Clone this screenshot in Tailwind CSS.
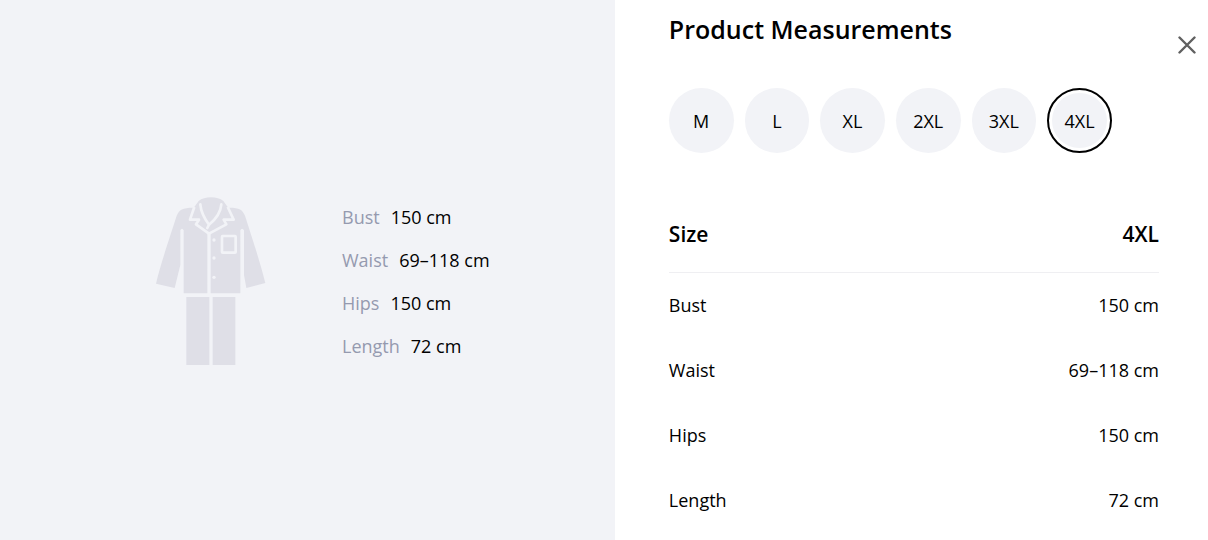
<!DOCTYPE html>
<html lang="en">

<head>
    <meta charset="UTF-8" />
    <meta name="viewport" content="width=device-width, initial-scale=1.0" />
    <title>Product Measurements</title>

    <!-- Tailwind CSS -->
    <script src="https://cdn.jsdelivr.net/npm/@tailwindcss/browser@4"></script>
</head>

<body class="bg-white text-black text-lg font-['Open_Sans',sans-serif]">

    <div class="relative grid grid-cols-[509fr_491fr] min-h-screen">

        <!-- Garment preview -->
        <section class="flex items-center gap-[75px] bg-[#f2f3f7] pl-[155px] pt-[22px]">
            <svg class="w-28 h-[170px] shrink-0" viewBox="30 33 336 510" fill="#dfdfe7" aria-hidden="true">
                <!-- Sleeves and body -->
                <path d="M145 68C112 68 103 74 95 92C78 145 46 240 33 296L89 309L106 240V136Q111 126 116 136V325H187V68Z" />
                <path d="M253 68C284 68 292 74 300 92C317 145 348 240 361 294L304 309L297 270V136Q291 126 286 136V325H197V68Z" />
                <path d="M187 68H197V140H187Z" />
                <!-- Collar -->
                <path d="M148 66L161 48C178 33 218 33 235 48L248 66L266 104H236L244 118L192 146L153 118L162 104H135Z" />
                <path d="M148 66L135 104H162L153 118L192 146L244 118L236 104H266L248 66" fill="none" stroke="#f2f3f7" stroke-width="8" stroke-linejoin="round" />
                <path d="M166 58C168 84 181 104 192 119C207 107 227 84 229 58M192 119L187 129" fill="none" stroke="#f2f3f7" stroke-width="8" stroke-linecap="round" />
                <!-- Pocket and buttons -->
                <rect x="231" y="153" width="41" height="50" rx="2" fill="none" stroke="#f2f3f7" stroke-width="8" />
                <g fill="#f2f3f7">
                    <circle cx="207" cy="165" r="5" />
                    <circle cx="207" cy="219" r="5" />
                    <circle cx="207" cy="277" r="5" />
                </g>
                <!-- Trousers -->
                <path d="M124 336H193V540H124ZM203 336H271V540H203Z" />
            </svg>

            <dl class="flex flex-col gap-4 pt-px leading-[27px] whitespace-nowrap">
                <div class="flex gap-[11px]">
                    <dt class="text-[#959aaf]">Bust</dt>
                    <dd>150 cm</dd>
                </div>
                <div class="flex gap-[11px]">
                    <dt class="text-[#959aaf]">Waist</dt>
                    <dd>69–118 cm</dd>
                </div>
                <div class="flex gap-[11px]">
                    <dt class="text-[#959aaf]">Hips</dt>
                    <dd>150 cm</dd>
                </div>
                <div class="flex gap-[11px]">
                    <dt class="text-[#959aaf]">Length</dt>
                    <dd>72 cm</dd>
                </div>
            </dl>
        </section>

        <!-- Measurements -->
        <section class="pl-[54px] pr-[49px] pt-[11px]">
            <h1 class="text-[25px] leading-9 font-semibold">Product Measurements</h1>

            <div class="grid grid-cols-6 gap-[11px] max-w-[443px] mt-[41px]">
                <button type="button" class="aspect-square rounded-full bg-[#f2f3f7] pt-px cursor-pointer">M</button>
                <button type="button" class="aspect-square rounded-full bg-[#f2f3f7] pt-px cursor-pointer">L</button>
                <button type="button" class="aspect-square rounded-full bg-[#f2f3f7] pt-px cursor-pointer">XL</button>
                <button type="button" class="aspect-square rounded-full bg-[#f2f3f7] pt-px cursor-pointer">2XL</button>
                <button type="button" class="aspect-square rounded-full bg-[#f2f3f7] pt-px cursor-pointer">3XL</button>
                <button type="button" aria-pressed="true" class="aspect-square rounded-full bg-[#f2f3f7] pt-px border-2 border-black inset-ring-3 inset-ring-white cursor-pointer">4XL</button>
            </div>

            <table class="w-full mt-11">
                <thead>
                    <tr class="h-[76px] text-[21px] border-b border-[#efeff2]">
                        <th scope="col" class="text-left font-semibold">Size</th>
                        <th scope="col" class="text-right font-semibold">4XL</th>
                    </tr>
                </thead>
                <tbody>
                    <tr class="h-[65px]">
                        <th scope="row" class="text-left font-normal">Bust</th>
                        <td class="text-right">150 cm</td>
                    </tr>
                    <tr class="h-[65px]">
                        <th scope="row" class="text-left font-normal">Waist</th>
                        <td class="text-right">69–118 cm</td>
                    </tr>
                    <tr class="h-[65px]">
                        <th scope="row" class="text-left font-normal">Hips</th>
                        <td class="text-right">150 cm</td>
                    </tr>
                    <tr class="h-[65px]">
                        <th scope="row" class="text-left font-normal">Length</th>
                        <td class="text-right">72 cm</td>
                    </tr>
                </tbody>
            </table>
        </section>

        <button type="button" aria-label="Close" class="absolute top-8 right-2 p-1 text-[#606060] cursor-pointer">
            <svg class="w-[18px] h-[18px]" viewBox="0 0 18 18" fill="none" stroke="currentColor" stroke-width="2.4" stroke-linecap="round">
                <path d="M1.5 1.5L16.5 16.5M16.5 1.5L1.5 16.5" />
            </svg>
        </button>
    </div>

</body>

</html>
